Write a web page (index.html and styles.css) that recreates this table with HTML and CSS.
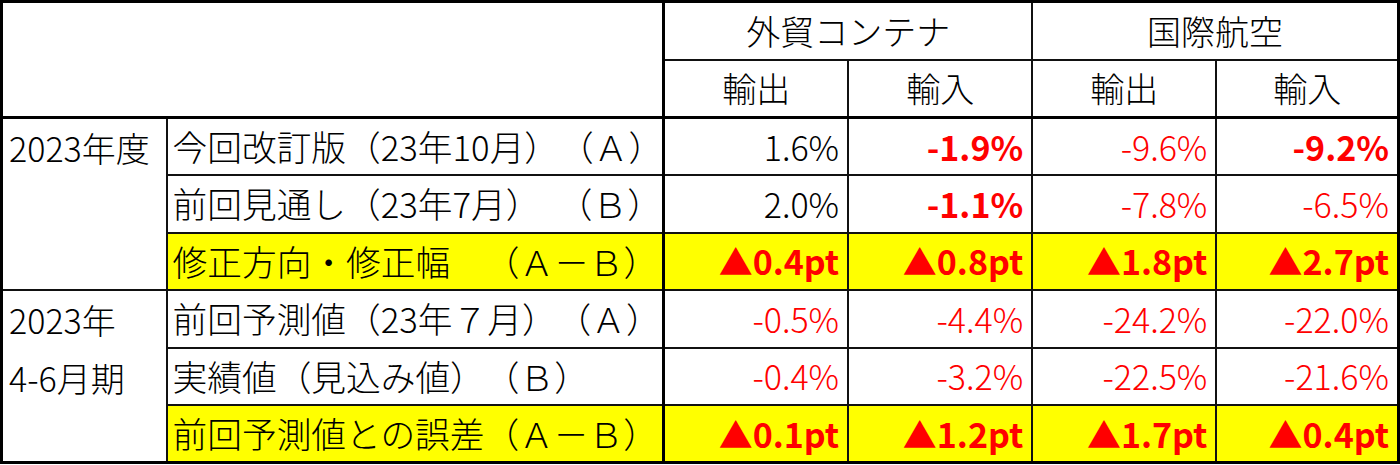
FILE: index.html
```html
<!DOCTYPE html>
<html lang="ja">
<head>
<meta charset="utf-8">
<title>修正表</title>
<link rel="stylesheet" href="styles.css">
</head>
<body>
<table class="tbl">
  <colgroup>
    <col class="c-year">
    <col class="c-label">
    <col class="c-val">
    <col class="c-val">
    <col class="c-val">
    <col class="c-val-last">
  </colgroup>
  <thead>
    <tr class="h1">
      <th class="corner" colspan="2" rowspan="2"></th>
      <th class="grp-head sep-left" colspan="2">外貿コンテナ</th>
      <th class="grp-head" colspan="2">国際航空</th>
    </tr>
    <tr class="h2">
      <th class="sub sep-left">輸出</th>
      <th class="sub">輸入</th>
      <th class="sub">輸出</th>
      <th class="sub">輸入</th>
    </tr>
  </thead>
  <tbody class="block">
    <tr class="first">
      <td class="year" rowspan="3">2023年度</td>
      <td class="label">今回改訂版（23年10月）（Ａ）</td>
      <td class="num sep-left">1.6%</td>
      <td class="num red bold">-1.9%</td>
      <td class="num red">-9.6%</td>
      <td class="num red bold">-9.2%</td>
    </tr>
    <tr class="light-bottom">
      <td class="label">前回見通し（23年7月）&#8194;（Ｂ）</td>
      <td class="num sep-left">2.0%</td>
      <td class="num red bold">-1.1%</td>
      <td class="num red">-7.8%</td>
      <td class="num red">-6.5%</td>
    </tr>
    <tr class="hl">
      <td class="label">修正方向・修正幅　（Ａ－Ｂ）</td>
      <td class="num sep-left red bold">▲0.4pt</td>
      <td class="num red bold">▲0.8pt</td>
      <td class="num red bold">▲1.8pt</td>
      <td class="num red bold">▲2.7pt</td>
    </tr>
  </tbody>
  <tbody class="block">
    <tr>
      <td class="year" rowspan="3">2023年<br>4-6月期</td>
      <td class="label">前回予測値（23年７月）（Ａ）</td>
      <td class="num sep-left red">-0.5%</td>
      <td class="num red">-4.4%</td>
      <td class="num red">-24.2%</td>
      <td class="num red">-22.0%</td>
    </tr>
    <tr>
      <td class="label">実績値（見込み値）（Ｂ）</td>
      <td class="num sep-left red">-0.4%</td>
      <td class="num red">-3.2%</td>
      <td class="num red">-22.5%</td>
      <td class="num red">-21.6%</td>
    </tr>
    <tr class="hl">
      <td class="label">前回予測値との誤差（Ａ－Ｂ）</td>
      <td class="num sep-left red bold">▲0.1pt</td>
      <td class="num red bold">▲1.2pt</td>
      <td class="num red bold">▲1.7pt</td>
      <td class="num red bold">▲0.4pt</td>
    </tr>
  </tbody>
</table>
</body>
</html>
```

FILE: styles.css
```css
html, body {
  margin: 0;
  padding: 0;
  background: #ffffff;
}

.tbl {
  border-collapse: collapse;
  table-layout: fixed;
  width: 1400px;
  font-family: "Noto Sans CJK JP", "Noto Sans", sans-serif;
  font-weight: 300;
  font-size: 34px;
  color: #000000;
  border: 3px solid #000000;
  text-spacing-trim: space-all;
}

.c-year { width: 165px; }
.c-label { width: 497px; }
.c-val { width: 184px; }
.c-val-last { width: 182px; }

.tbl th,
.tbl td {
  border: 2px solid #111111;
  padding: 0 8px;
  white-space: nowrap;
  line-height: 1;
}

.tbl th {
  font-weight: 300;
  text-align: center;
}

.h1 { height: 58px; }
.h2 { height: 58px; }

.tbl thead tr.h2 th,
.tbl thead th.corner {
  border-bottom: 3px solid #000000;
}

.sep-left {
  border-left: 3px solid #000000 !important;
}

.tbl tbody tr { height: 57.5px; }

.block + .block tr:first-child td {
  border-top: 2px solid #000000;
}

.year {
  vertical-align: top;
  text-align: left;
  padding: 0 6px !important;
  line-height: 57.5px !important;
}

.label {
  text-align: left;
  font-size: 34.7px;
  padding-left: 5px !important;
  padding-right: 0 !important;
}

.num {
  text-align: right;
  padding-right: 8px !important;
}

.light-bottom td {
  border-bottom: 1px solid #888888 !important;
}

.red { color: #ff0000; }
.bold { font-weight: bold; }

.hl td.label,
.hl td.num {
  background: #ffff00;
}
```
